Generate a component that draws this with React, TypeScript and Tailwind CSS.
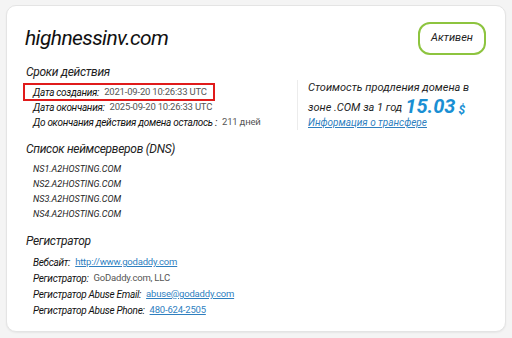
import React from "react";

const dates = [
  { label: "Дата создания:", value: "2021-09-20 10:26:33 UTC" },
  { label: "Дата окончания:", value: "2025-09-20 10:26:33 UTC" },
  { label: "До окончания действия домена осталось :", value: "211 дней" },
];

const nameservers = ["NS1.A2HOSTING.COM", "NS2.A2HOSTING.COM", "NS3.A2HOSTING.COM", "NS4.A2HOSTING.COM"];

const registrar: Array<{ label: string; value: string; link?: boolean }> = [
  { label: "Вебсайт:", value: "http://www.godaddy.com", link: true },
  { label: "Регистратор:", value: "GoDaddy.com, LLC" },
  { label: "Регистратор Abuse Email:", value: "abuse@godaddy.com", link: true },
  { label: "Регистратор Abuse Phone:", value: "480-624-2505", link: true },
];

function Row({ label, value, link, h = "h-[16px]" }: { label: string; value: string; link?: boolean; h?: string }) {
  return (
    <div className={`flex items-center ${h} whitespace-nowrap`}>
      <span className="italic text-[10px] text-[#111] tracking-[-0.3px]">{label}</span>
      <span
        className={
          link
            ? "ml-[5px] text-[9.5px] tracking-[-0.2px] text-[#2f7fbf] underline"
            : "ml-[5px] text-[9.5px] tracking-[-0.2px] text-[#555]"
        }
      >
        {value}
      </span>
    </div>
  );
}

export default function App() {
  return (
    <div className="w-[512px] h-[338px] bg-[#f4f4f4] pt-[5px] pl-[6px] font-['Roboto',sans-serif]">
      <div className="w-[500px] h-[327px] bg-white border border-[#e4e4e4] rounded-[10px] shadow-[0_1px_2px_rgba(0,0,0,0.06)] pl-[18px] pr-[18px] pt-[16px]">
        <div className="flex items-center justify-between h-[32px]">
          <h1 className="italic text-[21px] leading-none text-[#111] tracking-[-0.6px]">highnessinv.com</h1>
          <div className="w-[68px] h-[33px] border-2 border-[#8dc43f] rounded-[12px] flex items-center justify-center italic text-[11px] text-[#222] mr-[1px]">
            Активен
          </div>
        </div>

        <div className="flex mt-[10px]">
          <div className="w-[272px]">
            <h2 className="italic text-[12px] leading-[16px] text-[#222] ml-[1px] tracking-[-0.3px]">Сроки действия</h2>
            <div className="mt-[3px] ml-[-2px] w-[192px] h-[18px] border-2 border-[#e01b1b] pl-[8px] flex items-center">
              <Row label={dates[0].label} value={dates[0].value} h="h-[14px]" />
            </div>
            <div className="pl-[8px]">
              <Row label={dates[1].label} value={dates[1].value} h="h-[13px]" />
              <Row label={dates[2].label} value={dates[2].value} />
            </div>
          </div>
          <div className="mt-[16px] border-l border-[#ececec] pl-[10px] h-[50px]">
            <p className="italic text-[11px] leading-[16px] text-[#1e1e1e] whitespace-nowrap">Стоимость продления домена в</p>
            <p className="italic text-[11px] h-[20px] flex items-end text-[#1e1e1e] whitespace-nowrap">
              <span>зоне .COM за 1 год</span>
              <span className="font-bold text-[20px] leading-none text-[#1a8fd3] ml-[3px]">15.03</span>
              <span className="font-bold text-[12px] leading-none text-[#1a8fd3] ml-[3px]">$</span>
            </p>
            <a className="block italic text-[10px] leading-[14px] text-[#2f7fbf] underline whitespace-nowrap">Информация о трансфере</a>
          </div>
        </div>

        <h2 className="italic text-[12px] leading-[16px] text-[#222] mt-[11px] ml-[1px] tracking-[-0.3px]">Список неймсерверов (DNS)</h2>
        <div className="pl-[8px] mt-[5px]">
          {nameservers.map((ns) => (
            <div key={ns} className="italic text-[9px] h-[15px] flex items-center text-[#1e1e1e]">
              {ns}
            </div>
          ))}
        </div>

        <h2 className="italic text-[12px] leading-[16px] text-[#222] mt-[11px] ml-[1px] tracking-[-0.3px]">Регистратор</h2>
        <div className="pl-[8px] mt-[5px]">
          {registrar.map((r) => (
            <Row key={r.label} label={r.label} value={r.value} link={r.link} />
          ))}
        </div>
      </div>
    </div>
  );
}
